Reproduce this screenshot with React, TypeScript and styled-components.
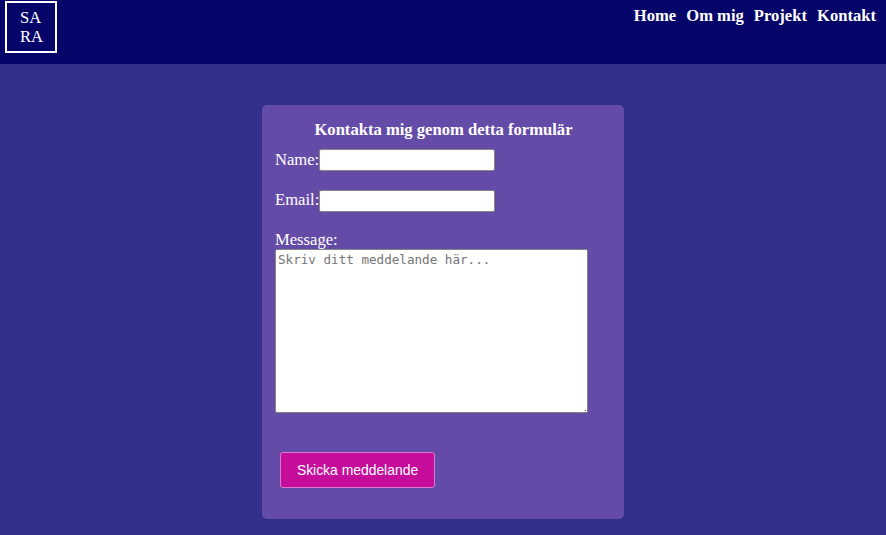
import React from "react";
import styled, { createGlobalStyle } from "styled-components";

const GlobalStyle = createGlobalStyle`
  *, *::before, *::after { box-sizing: border-box; }
  body {
    margin: 0;
    min-height: 535px;
    overflow: hidden;
    background: #32308a;
    color: #fff;
    font: 16.6px/19px "Liberation Serif", "Times New Roman", serif;
  }
`;

const Header = styled.header`
  display: flex;
  justify-content: space-between;
  align-items: flex-start;
  height: 64px;
  padding: 1px 10px 0 5px;
  background: #050468;
`;

const Logo = styled.div`
  width: 52px;
  height: 52px;
  padding: 5px 0 0 13px;
  border: 2px solid #fff;
`;

const Nav = styled.nav`
  display: flex;
  gap: 10px;
  padding-top: 5px;
`;

const NavLink = styled.a`
  color: #fff;
  font-weight: bold;
  text-decoration: none;
`;

const Form = styled.form`
  display: flex;
  flex-direction: column;
  align-items: flex-start;
  width: 362px;
  height: 414px;
  margin: 41px 0 0 262px;
  padding: 15px 13px 0;
  border-radius: 5px;
  background: #654ba8;
`;

const Title = styled.h1`
  align-self: center;
  margin: 0 0 10px 1px;
  font-size: inherit;
  line-height: 19px;
`;

const Field = styled.div`
  display: flex;
  align-items: flex-start;
  height: 40px;
`;

const Label = styled.label<{ $stacked?: boolean }>`
  display: block;
  width: 44px;
  margin-top: ${({ $stacked }) => ($stacked ? "1px" : "0")};
  padding-top: ${({ $stacked }) => ($stacked ? "0" : "1px")};
  white-space: nowrap;
`;

const Input = styled.input<{ $lowered?: boolean }>`
  width: 176px;
  height: 22px;
  margin: ${({ $lowered }) => ($lowered ? "1px" : "0")} 0 0;
  padding: 1px 2px;
  border: 1px solid #858585;
  border-radius: 2px;
  background: #fff;
`;

const Message = styled.textarea`
  display: block;
  width: 313px;
  height: 164px;
  padding: 2px;
  border: 1px solid #858585;
  border-radius: 2px;
  background: linear-gradient(#555, #555) right 1px bottom 1px / 1px 1px no-repeat #fff;
  font: 12.6px/16px "DejaVu Sans Mono", monospace;
  resize: none;
  &::placeholder { color: #757575; }
`;

const Submit = styled.button`
  width: 155px;
  height: 36px;
  margin: 39px 0 0 5px;
  padding: 0;
  border: 1px solid #dc78d4;
  border-radius: 3px;
  background: #c50d9c;
  color: #fff;
  font: 13.9px "Liberation Sans", Arial, sans-serif;
`;

const links = ["Home", "Om mig", "Projekt", "Kontakt"];

export default function App() {
  return (
    <>
      <GlobalStyle />
      <Header>
        <Logo>SA<br />RA</Logo>
        <Nav>
          {links.map((link) => (
            <NavLink key={link} href="#">{link}</NavLink>
          ))}
        </Nav>
      </Header>
      <Form>
        <Title>Kontakta mig genom detta formulär</Title>
        <Field>
          <Label htmlFor="name">Name:</Label>
          <Input id="name" type="text" />
        </Field>
        <Field>
          <Label htmlFor="email">Email:</Label>
          <Input id="email" type="email" $lowered />
        </Field>
        <Label htmlFor="message" $stacked>Message:</Label>
        <Message id="message" placeholder="Skriv ditt meddelande här..." />
        <Submit type="button">Skicka meddelande</Submit>
      </Form>
    </>
  );
}
